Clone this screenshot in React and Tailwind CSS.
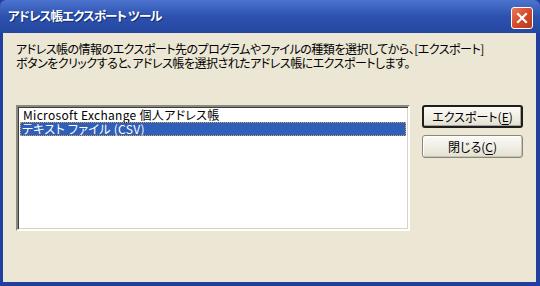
import React from "react";

const Btn = ({ label, mnemonic, isDefault }) => (
  <button
    className={`h-[23px] w-[101px] rounded-[3px] bg-gradient-to-b from-[#fbfaf6] via-[#f1efe6] to-[#e3dfd0] text-[12px] text-black flex items-center justify-center [font-feature-settings:'palt'] ${
      isDefault
        ? "border-2 border-[#1e1e1e] shadow-[inset_-1px_-1px_0_#a9a595]"
        : "border border-[#8a877a] shadow-[inset_-1px_-1px_0_#c9c5b4,inset_1px_1px_0_#ffffff]"
    }`}
  >
    {label}(<span className="underline underline-offset-2">{mnemonic}</span>)
  </button>
);

export default function App() {
  const font = { fontFamily: '"Noto Sans CJK JP", "Liberation Sans", sans-serif' };

  return (
    <div className="w-[540px] h-[286px] flex flex-col bg-[#203f9e] overflow-hidden" style={font}>
      {/* タイトルバー */}
      <div className="h-[33px] flex items-center justify-between pl-[8px] pr-[7px] bg-gradient-to-b from-[#4c74cf] via-[#2c51ae] to-[#25479f] rounded-t-[6px]">
        <span className="text-white font-bold text-[12.5px] tracking-[-0.9px] [font-feature-settings:'palt'] [text-shadow:1px_1px_0_#0f2a70]">
          アドレス帳エクスポート ツール
        </span>
        <div className="w-[22px] h-[22px] mt-[2px] rounded-[3px] border border-white bg-gradient-to-br from-[#e8785a] via-[#d54a2a] to-[#b8381c] flex items-center justify-center">
          <svg width="12" height="12" viewBox="0 0 12 12">
            <path d="M2 2 L10 10 M10 2 L2 10" stroke="white" strokeWidth="2.2" strokeLinecap="square" />
          </svg>
        </div>
      </div>

      {/* 本体 */}
      <div className="flex-1 ml-[3px] mr-[4px] mb-[4px] bg-[#ebe7d4] pt-[9px] pl-[13px]">
        <p className="text-[12px] leading-[14px] tracking-[-0.5px] text-black [font-feature-settings:'palt']">
          アドレス帳の情報のエクスポート先のプログラムやファイルの種類を選択してから、[エクスポート]
          <br />
          ボタンをクリックすると、アドレス帳を選択されたアドレス帳にエクスポートします。
        </p>

        <div className="flex mt-[35px]">
          <div className="w-[394px] h-[126px] bg-white border-2 border-t-[#8c8a80] border-l-[#8c8a80] border-r-white border-b-white shadow-[inset_1px_1px_0_#3c3c3c,inset_-1px_-1px_0_#d8d4c4] p-[1px]">
            <div className="text-[12px] leading-[14px] tracking-[0.3px] pl-[4px] text-black [font-feature-settings:'palt']">
              Microsoft Exchange 個人アドレス帳
            </div>
            <div className="text-[12px] leading-[14px] tracking-[0.3px] pl-[2px] ml-[1px] mr-[1px] text-white bg-[#2f5fb8] outline-1 outline-dotted outline-[#d9a24a] -outline-offset-1 [font-feature-settings:'palt']">
              テキスト ファイル (CSV)
            </div>
          </div>

          <div className="ml-[12px] flex flex-col gap-[7px]">
            <Btn label="エクスポート" mnemonic="E" isDefault />
            <Btn label="閉じる" mnemonic="C" />
          </div>
        </div>
      </div>
    </div>
  );
}
